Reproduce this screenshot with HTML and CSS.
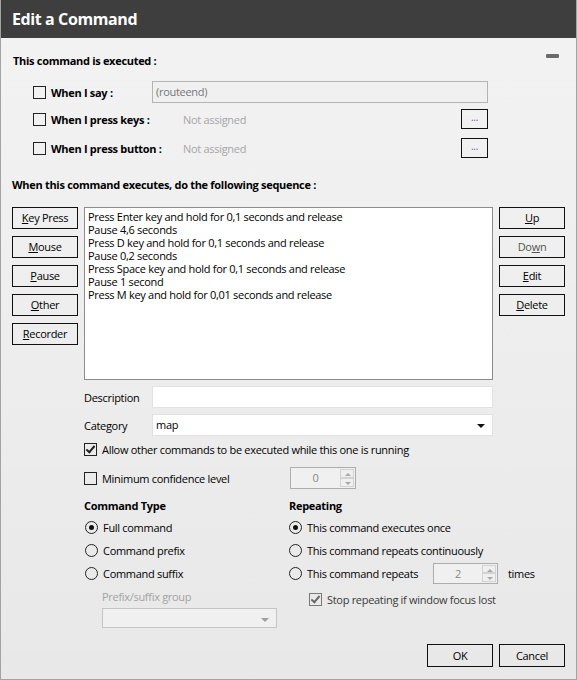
FILE: index.html
```html
<!DOCTYPE html>
<html lang="en">
<head>
  <meta charset="UTF-8">
  <title>Edit a Command</title>
  <link rel="stylesheet" href="styles.css">
</head>
<body>
  <div class="dialog">
    <div class="titlebar">Edit a Command</div>
    <div class="content">
      <!-- Triggers -->
      <div class="head-row">
        <span class="heading">This command is executed :</span>
        <span class="collapse"></span>
      </div>
      <div class="trigger-row first">
        <span class="check"></span>
        <span class="trigger-label short">When I say :</span>
        <span class="say-box">(routeend)</span>
      </div>
      <div class="trigger-row second">
        <span class="check"></span>
        <span class="trigger-label">When I press keys :</span>
        <span class="not-assigned">Not assigned</span>
        <span class="dots-btn">...</span>
      </div>
      <div class="trigger-row third">
        <span class="check"></span>
        <span class="trigger-label">When I press button :</span>
        <span class="not-assigned">Not assigned</span>
        <span class="dots-btn">...</span>
      </div>

      <!-- Sequence -->
      <div class="heading seq-heading">When this command executes, do the following sequence :</div>
      <div class="seq">
        <div class="btn-col">
          <span class="btn"><u>K</u>ey Press</span>
          <span class="btn"><u>M</u>ouse</span>
          <span class="btn"><u>P</u>ause</span>
          <span class="btn"><u>O</u>ther</span>
          <span class="btn"><u>R</u>ecorder</span>
        </div>
        <div class="seq-list">
          <div>Press Enter key and hold for 0,1 seconds and release</div>
          <div>Pause 4,6 seconds</div>
          <div>Press D key and hold for 0,1 seconds and release</div>
          <div>Pause 0,2 seconds</div>
          <div>Press Space key and hold for 0,1 seconds and release</div>
          <div>Pause 1 second</div>
          <div>Press M key and hold for 0,01 seconds and release</div>
        </div>
        <div class="btn-col">
          <span class="btn"><u>U</u>p</span>
          <span class="btn muted">Do<u>w</u>n</span>
          <span class="btn"><u>E</u>dit</span>
          <span class="btn"><u>D</u>elete</span>
        </div>
      </div>

      <!-- Details -->
      <div class="details">
        <div class="field-row">
          <span class="field-label">Description</span>
          <span class="text-box"></span>
        </div>
        <div class="field-row">
          <span class="field-label">Category</span>
          <span class="text-box select">map<span class="arrow"></span></span>
        </div>
        <div class="check-row allow">
          <span class="check on"></span>
          <span>Allow other commands to be executed while this one is running</span>
        </div>
        <div class="check-row confidence">
          <span class="check"></span>
          <span class="conf-label">Minimum confidence level</span>
          <span class="spin wide"><span class="spin-val">0</span><span class="spin-btns"><i class="up"></i><i class="down"></i></span></span>
        </div>

        <div class="columns">
          <div class="col-left">
            <div class="heading col-heading">Command Type</div>
            <div class="radio-row"><span class="radio on"></span>Full command</div>
            <div class="radio-row"><span class="radio"></span>Command prefix</div>
            <div class="radio-row"><span class="radio"></span>Command suffix</div>
            <div class="group-label">Prefix/suffix group</div>
            <div class="group-select"><span class="arrow grey"></span></div>
          </div>
          <div class="col-right">
            <div class="heading col-heading">Repeating</div>
            <div class="radio-row"><span class="radio on"></span>This command executes once</div>
            <div class="radio-row"><span class="radio"></span>This command repeats continuously</div>
            <div class="radio-row repeats">
              <span class="radio"></span><span class="rep-label">This command repeats</span>
              <span class="spin small"><span class="spin-val">2</span><span class="spin-btns"><i class="up"></i><i class="down"></i></span></span>
              <span class="times">times</span>
            </div>
            <div class="check-row stop">
              <span class="check on grey"></span>
              <span>Stop repeating if window focus lost</span>
            </div>
          </div>
        </div>
      </div>

      <div class="footer">
        <span class="btn">OK</span>
        <span class="btn">Cancel</span>
      </div>
    </div>
  </div>
</body>
</html>
```

FILE: styles.css
```css
html, body {
  margin: 0; padding: 0;
  background: #ffffff;
}
body {
  font-family: "Open Sans", "Noto Sans", sans-serif; font-size: 11px; color: #000;
  letter-spacing: -0.3px;
}

.dialog {
  width: 577px; height: 680px;
  box-sizing: border-box;
  border: 1px solid #a3a3a3; border-top: none;
  background: linear-gradient(#f3f3f3, #e8e8e8);
  overflow: hidden;
}
.titlebar {
  height: 38px; line-height: 38px;
  margin: 0 -1px;
  padding-left: 12px;
  background: #3e3e3e; color: #fff;
  font-size: 16px; font-weight: bold; letter-spacing: -0.4px;
}
.content { padding: 16px 11px 0 11px; }
.heading { font-weight: bold; line-height: 14px; }

/* top triggers */
.head-row { display: flex; justify-content: space-between; height: 14px; padding-left: 1px; }
.collapse { width: 13px; height: 4px; background: #6b6b6b; border-radius: 1px; margin-right: 6px; }
.trigger-row {
  display: flex; align-items: center;
  width: 455px; height: 22px;
  margin-left: 21px;
}
.trigger-row.first { margin-top: 13px; }
.trigger-row.second { margin-top: 5px; }
.trigger-row.third { margin-top: 7px; }
.trigger-label { font-weight: bold; width: 132px; flex: none; }
.trigger-label.short { width: 101px; }
.check {
  width: 11px; height: 11px; flex: none;
  border: 1px solid #222; margin-right: 5px;
  position: relative;
}
.check.on::after {
  content: ""; position: absolute;
  left: 3px; top: 0px; width: 3px; height: 7px;
  border: solid #222; border-width: 0 2px 2px 0;
  transform: rotate(40deg);
}
.check.grey { border-color: #7a7a7a; }
.check.grey::after { border-color: #6a6a6a; }
.say-box {
  flex: 1; height: 20px; line-height: 20px;
  border: 1px solid #b4b4b4; background: #f0f0f0;
  padding-left: 3px; color: #777;
}
.not-assigned { flex: 1; color: #a6a6a6; }
.dots-btn {
  width: 25px; height: 18px; line-height: 14px;
  border: 1px solid #111; text-align: center; color: #7a5a8a;
  font-size: 10px;
}

/* sequence */
.seq-heading { margin-top: 19px; }
.seq { display: flex; gap: 6px; margin-top: 15px; height: 173px; }
.btn-col { display: flex; flex-direction: column; gap: 7px; width: 66px; flex: none; }
.btn {
  display: block; box-sizing: border-box;
  width: 66px; height: 22px; line-height: 20px;
  border: 1px solid #111; text-align: center;
}
.btn.muted { color: #555; }
.seq-list {
  flex: 1; box-sizing: border-box;
  background: #fff; border: 1px solid #8c8c8c;
  padding: 2px 3px; line-height: 13px;
}

/* details */
.details { margin-left: 72px; }
.field-row { display: flex; align-items: center; margin-top: 6px; height: 22px; width: 409px; }
.field-label { width: 68px; flex: none; }
.text-box {
  flex: 1; height: 20px; line-height: 20px; box-sizing: content-box;
  background: #fff; border: 1px solid #e2e2e2; padding-left: 3px;
  position: relative;
}
.arrow {
  position: absolute; right: 7px; top: 9px;
  border: 4px solid transparent; border-top: 4px solid #111; border-bottom: 0;
}
.arrow.grey { border-top-color: #a0a0a0; }
.check-row { display: flex; align-items: center; }
.allow { margin-top: 6px; height: 14px; }
.confidence { margin-top: 11px; height: 22px; }
.conf-label { width: 188px; }

.spin {
  display: flex; box-sizing: border-box;
  border: 1px solid #adadad; background: #f0f0f0; color: #888;
}
.spin.wide { width: 66px; height: 22px; }
.spin.small { width: 65px; height: 21px; margin: 0 10px 0 0; }
.rep-label { width: 126px; }
.spin-val { flex: 1; text-align: center; line-height: 20px; }
.spin-btns { display: flex; flex-direction: column; width: 15px; padding: 1px 1px 1px 0; box-sizing: border-box; }
.spin-btns i {
  flex: 1; position: relative;
  border: 1px solid #d2d2d2; background: #efefef;
}
.spin-btns i::after {
  content: ""; position: absolute; left: 4px; top: 3px;
  border: 3px solid transparent;
}
.spin-btns .up::after { border-bottom: 3px solid #a8a8a8; border-top: 0; }
.spin-btns .down::after { border-top: 3px solid #a8a8a8; border-bottom: 0; }

.columns { display: flex; margin-top: 10px; }
.col-left { width: 205px; }
.col-right { flex: 1; }
.col-heading { height: 14px; }
.radio-row { display: flex; align-items: center; height: 18px; margin-top: 5px; }
.col-heading + .radio-row { margin-top: 5px; }
.radio {
  width: 11px; height: 11px; flex: none; box-sizing: content-box;
  border: 1px solid #222; border-radius: 50%;
  margin-right: 5px; position: relative;
}
.col-left .radio { margin-left: 1px; }
.radio.on::after {
  content: ""; position: absolute; left: 3px; top: 3px;
  width: 5px; height: 5px; border-radius: 50%; background: #111;
}
.group-label { color: #a3a3a3; margin: 8px 0 0 18px; line-height: 14px; }
.group-select {
  width: 173px; height: 18px; margin: 4px 0 0 18px;
  border: 1px solid #c4c4c4; background: #f0f0f0; position: relative;
}
.stop { margin: 10px 0 0 20px; height: 14px; color: #3a3a3a; }

.footer { display: flex; justify-content: flex-end; gap: 6px; margin-top: 16px; }
.footer .btn { height: 23px; line-height: 21px; }
```
